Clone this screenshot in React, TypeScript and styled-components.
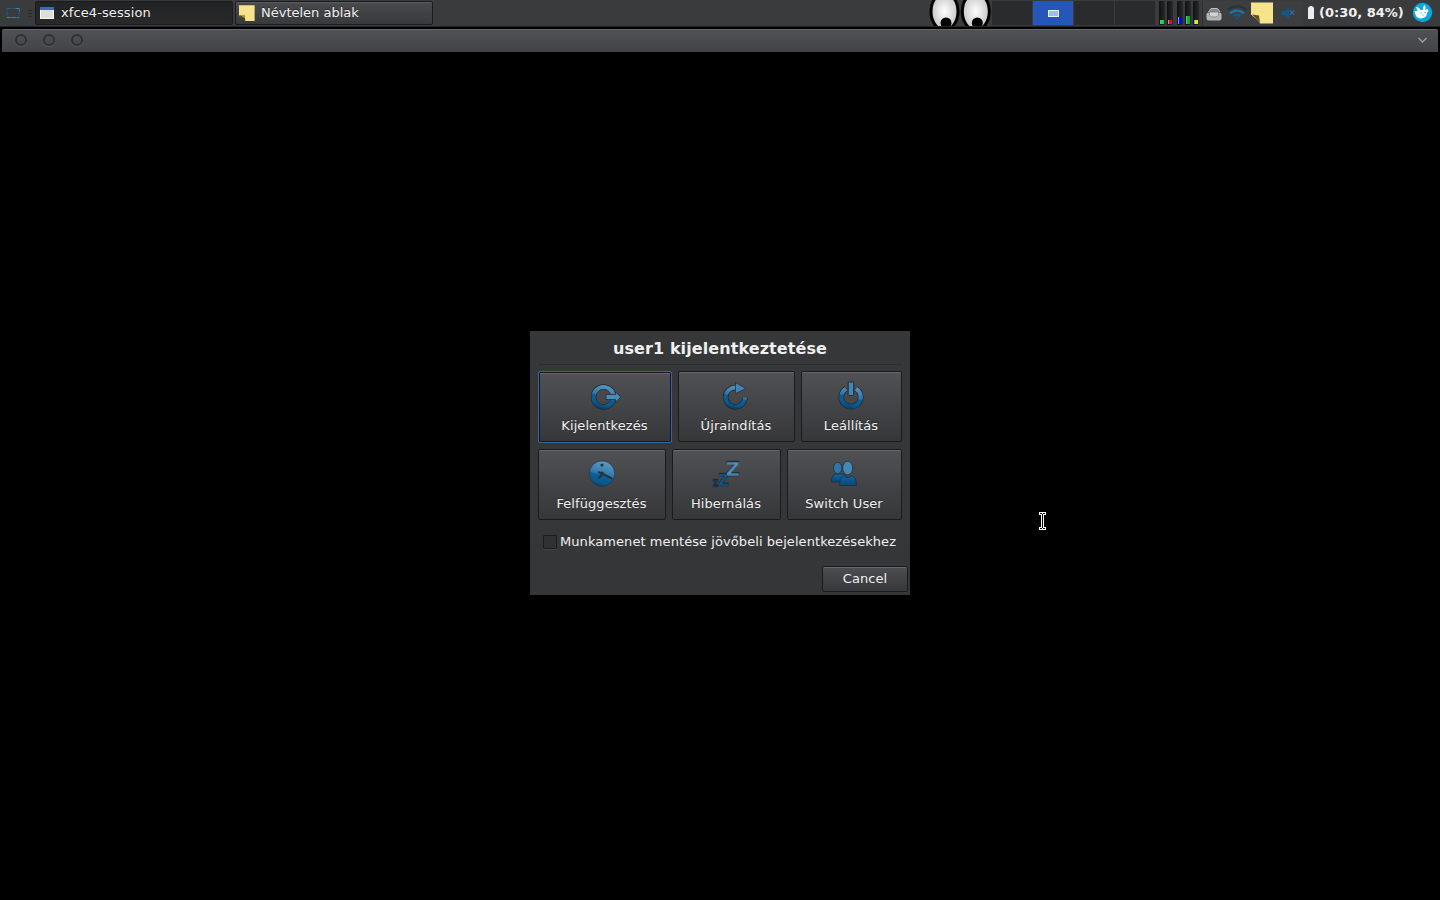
import React from 'react';
import styled, { createGlobalStyle } from 'styled-components';

const GlobalStyle = createGlobalStyle`
  html, body {
    margin: 0;
    padding: 0;
    background: #000;
    overflow: hidden;
  }

  * {
    box-sizing: border-box;
  }

  svg {
    display: block;
    flex: none;
  }
`;

const Desktop = styled.div`
  position: relative;
  display: flex;
  flex-direction: column;
  width: 1440px;
  height: 900px;
  background: #000;
  color: #f0f0f0;
  font-family: "DejaVu Sans", sans-serif;
  font-size: 13px;
  line-height: 16px;
  letter-spacing: 0.07px;
  overflow: hidden;
`;

const Panel = styled.header`
  display: flex;
  align-items: flex-start;
  height: 27px;
  background: #3a3b3d;
  border-bottom: 1px solid #242526;
`;

const Launcher = styled.div`
  display: flex;
  gap: 7px;
  width: 35px;
  height: 26px;
  padding: 6px 0 0 6px;
`;

const TaskButton = styled.button<{ $active?: boolean }>`
  display: flex;
  align-items: center;
  gap: ${(props) => (props.$active ? '7px' : '6px')};
  width: 198px;
  height: 24px;
  margin: 1px 2px 0 0;
  padding: 0 0 1px ${(props) => (props.$active ? '4px' : '3px')};
  border: 1px solid #1a1b1c;
  border-radius: 2px;
  background: ${(props) => (props.$active ? 'linear-gradient(#222324, #29292a)' : 'linear-gradient(#4a4b4e, #38393b)')};
  box-shadow: ${(props) => (props.$active ? 'none' : 'inset 0 1px 0 #5a5b5e')};
  color: #f0f0f0;
  font: inherit;
  letter-spacing: ${(props) => (props.$active ? '0.1px' : '0')};
  text-shadow: 0 -1px 0 rgba(0, 0, 0, 0.4);
`;

const PanelRight = styled.div`
  display: flex;
  margin-left: auto;
  height: 26px;
`;

const Pager = styled.div`
  display: flex;
  gap: 1px;
  padding: 1px 0;
`;

const Workspace = styled.div<{ $active?: boolean }>`
  display: flex;
  align-items: center;
  justify-content: center;
  width: 40px;
  height: 24px;
  background: ${(props) => (props.$active ? '#2457b8' : '#2a2b2d')};
`;

const MiniWindow = styled.div`
  width: 11px;
  height: 7px;
  border: 1px solid #f2f2f2;
  background: #9dbcff;
`;

const Monitors = styled.div`
  display: flex;
  gap: 2px;
  width: 47px;
  padding: 1px 0 1px 4px;
`;

const Meter = styled.div<{ $wide?: boolean }>`
  display: flex;
  align-items: flex-end;
  width: 6px;
  height: 24px;
  margin-left: ${(props) => (props.$wide ? '2px' : '0')};
  padding: 0 1px 1px;
  border-radius: 1px;
  background: linear-gradient(90deg, #111213, #29292b);
`;

const Level = styled.div<{ $color: string }>`
  width: 4px;
  background: linear-gradient(90deg, #69a7f5 1px, ${(props) => props.$color} 1px);
`;

const Tray = styled.div`
  display: flex;
  align-items: flex-start;
  width: 100px;
  height: 25px;
  margin-top: 1px;
  border-left: 1px solid #303133;
  background: #3d3e40;
`;

const Battery = styled.div`
  display: flex;
  width: 111px;
  padding: 5px 0 0 6px;
  gap: 5px;
  font-weight: bold;
  letter-spacing: 0;
  white-space: nowrap;
`;

const TitleBar = styled.div`
  display: flex;
  align-items: center;
  height: 23px;
  margin: 2px 2px 0;
  padding: 0 11px 2px 13px;
  border-top: 1px solid #66676a;
  border-radius: 2px 2px 0 0;
  background: linear-gradient(#505154, #434446);
`;

const WindowButton = styled.span`
  width: 12px;
  height: 12px;
  margin-right: 16px;
  border: 2px solid #303133;
  border-radius: 50%;
  box-shadow: 0 1px 0 #5a5b5e;
`;

const Stage = styled.main`
  display: flex;
  flex: 1;
  align-items: flex-start;
  justify-content: center;
  padding-top: 279px;
`;

const Dialog = styled.section`
  width: 380px;
  height: 264px;
  padding: 0 2px 3px 8px;
  background: linear-gradient(#363739, #353638);
`;

const DialogTitle = styled.h1`
  width: 364px;
  height: 34px;
  margin: 0 0 6px;
  padding-top: 8px;
  border-bottom: 1px solid #2b2c2d;
  font-size: 16px;
  line-height: 20px;
  letter-spacing: 0.09px;
  text-align: center;
  white-space: nowrap;
`;

const ButtonRow = styled.div`
  display: flex;
  justify-content: space-between;
  width: 364px;
  height: 71px;
  margin-bottom: 7px;
`;

const ActionButton = styled.button<{ $width: number; $focused?: boolean }>`
  display: flex;
  flex-direction: column;
  align-items: center;
  width: ${(props) => props.$width}px;
  height: ${(props) => (props.$focused ? 72 : 71)}px;
  padding: 8px 1px 0 0;
  border: 1px solid ${(props) => (props.$focused ? '#3a62ac' : '#1a1b1c')};
  border-radius: 2px;
  background: linear-gradient(#505154, #363739);
  box-shadow: ${(props) =>
    props.$focused ? 'inset 0 0 0 1px #17181a, inset 0 2px 0 #67686b' : 'inset 0 1px 0 #67686b'};
  color: #f0f0f0;
  font: inherit;
  letter-spacing: inherit;
  text-shadow: 0 -1px 0 rgba(0, 0, 0, 0.4);
  white-space: nowrap;

  svg {
    margin-bottom: 6px;
  }
`;

const SaveSession = styled.label`
  display: flex;
  align-items: center;
  gap: 3px;
  height: 16px;
  margin: 14px 0 16px 5px;
  white-space: nowrap;
`;

const CheckBox = styled.span`
  width: 14px;
  height: 14px;
  border: 1px solid #1b1c1d;
  border-radius: 1px;
  background: #303133;
  box-shadow: 0 1px 0 #454648;
`;

const CancelButton = styled.button`
  display: block;
  width: 86px;
  height: 26px;
  margin-left: auto;
  padding: 0 0 1px;
  border: 1px solid #1a1b1c;
  border-radius: 2px;
  background: linear-gradient(#4d4e51, #363739);
  box-shadow: inset 0 1px 0 #67686b;
  color: #f0f0f0;
  font: inherit;
  letter-spacing: inherit;
`;

const Pointer = styled.svg`
  position: absolute;
  left: 1037px;
  top: 511px;
`;

const HiddenDefs = styled.svg`
  position: absolute;
`;

const Gradients = () => (
  <HiddenDefs width="0" height="0">
    <defs>
      <linearGradient id="blue" gradientUnits="userSpaceOnUse" x1="20" y1="4" x2="13" y2="29">
        <stop offset="0" stopColor="#5b9ac4" />
        <stop offset="0.5" stopColor="#2f78ac" />
        <stop offset="0.55" stopColor="#0d5d96" />
        <stop offset="0.8" stopColor="#0a5a92" />
        <stop offset="1" stopColor="#063f6b" />
      </linearGradient>
      <linearGradient id="body" x1="0" y1="0" x2="0" y2="1">
        <stop offset="0" stopColor="#0f66a2" />
        <stop offset="1" stopColor="#094674" />
      </linearGradient>
      <radialGradient id="eyeball">
        <stop offset="0" stopColor="#fff" />
        <stop offset="1" stopColor="#c6c6c6" />
      </radialGradient>
    </defs>
  </HiddenDefs>
);

const LogoutIcon = () => (
  <svg width="32" height="32" viewBox="0 0 32 32" fill="none">
    <circle cx="14.5" cy="17" r="10" stroke="#242628" strokeWidth="5.5" />
    <circle cx="14.5" cy="17" r="10" stroke="url(#blue)" strokeWidth="4.2" />
    <path d="M17 14.500h9.500v-2.500l5.500 5l-5.500 5v-2.500h-9.500z" fill="#4a8cb9" stroke="#26292c" strokeWidth="0.8" />
  </svg>
);

const RestartIcon = () => (
  <svg width="32" height="32" viewBox="0 0 32 32" fill="none">
    <path d="M16 7.500A9.700 9.700 0 1 0 25 17.500" stroke="#242628" strokeWidth="5.5" />
    <path d="M16 7.500A9.700 9.700 0 1 0 25 17.500" stroke="url(#blue)" strokeWidth="4" />
    <path d="M15.500 2.500L26 8.500L15.500 13.500z" fill="#4383b0" stroke="#26292c" strokeWidth="0.7" />
  </svg>
);

const PowerIcon = () => (
  <svg width="32" height="32" viewBox="0 0 32 32" fill="none">
    <path d="M11 8.700A9.700 9.700 0 1 0 21 8.700" stroke="#242628" strokeWidth="5.5" />
    <path d="M11 8.700A9.700 9.700 0 1 0 21 8.700" stroke="url(#blue)" strokeWidth="4.2" />
    <rect x="13.2" y="2" width="5.500" height="13.500" rx="1" fill="#4385b3" stroke="#26292c" />
  </svg>
);

const ClockIcon = () => (
  <svg width="32" height="32" viewBox="0 0 32 32" fill="none">
    <circle cx="16" cy="15.5" r="12.7" fill="url(#blue)" stroke="#27333c" strokeWidth="0.8" />
    <circle cx="16" cy="7" r="1.6" fill="#243441" />
    <path d="M12 14L17 16L26 20.500M17 15.500L12.500 20.500" stroke="#243441" strokeWidth="2" />
    <circle cx="16" cy="15.5" r="2" fill="#243441" />
  </svg>
);

const SleepIcon = () => (
  <svg
    width="32"
    height="32"
    viewBox="0 0 32 32"
    fontFamily="DejaVu Sans"
    fontWeight="bold"
    stroke="#242628"
    strokeWidth="0.3"
    letterSpacing="0"
  >
    <text>
      <tspan x="2.5" y="28.500" fontSize="8" fill="#094b7b">Z</tspan>
      <tspan x="8" y="28" fontSize="15" fill="#0d5d96">Z</tspan>
      <tspan x="15.5" y="18" fontSize="20" fill="#4f90bc">Z</tspan>
    </text>
  </svg>
);

const UsersIcon = () => (
  <svg width="32" height="32" viewBox="0 0 32 32" stroke="#25282b" strokeWidth="0.7">
    <path d="M3.500 24c0-5 2-8 5-8h6c3 0 5 3 5 8z" fill="url(#body)" />
    <ellipse cx="9.700" cy="10" rx="4.200" ry="5.700" fill="#2e76aa" />
    <path d="M11.500 27.500c0-6 2-9.500 5-9.500c2 2 5 2 7 0c3 0 5 3.500 5 9.500z" fill="url(#body)" />
    <ellipse cx="19.700" cy="10" rx="5" ry="6.800" fill="#4787b3" />
  </svg>
);

const NoteIcon = ({ size }: { size: number }) => (
  <svg width={size} height={size} viewBox="0 0 22 22">
    <path d="M0 0.500H21.500V22H9L0 14.500z" fill="#f6e38c" />
    <path d="M0 14.500L8 14L8.500 22z" fill="#3b3210" />
    <path d="M2 14l6-.5v5z" fill="#b59b48" />
  </svg>
);

const WindowIcon = () => (
  <svg width="14" height="12" viewBox="0 0 14 12">
    <rect width="14" height="12" fill="#f8f8f6" />
    <rect width="14" height="3" fill="#3b6cb0" />
    <rect x="1" y="3" width="12" height="8" fill="#dedfd9" />
  </svg>
);

const Eyes = () => (
  <svg width="63" height="26" viewBox="0 0 63 26">
    {[15.5, 46.8].map((x) => (
      <g key={x}>
        <ellipse cx={x} cy="11.500" rx="13.500" ry="18.500" fill="url(#eyeball)" stroke="#000" strokeWidth="3" />
        <circle cx={x + 1.5} cy="23" r="5.500" />
      </g>
    ))}
  </svg>
);

const TrayIcons = () => (
  <svg width="98" height="25" viewBox="1203 1 98 25">
    <rect x="1206.500" y="12.500" width="15" height="8" rx="2" fill="#b4b4b4" />
    <path d="M1208.500 12l2.500-3.500h6.500l2.500 3.500" fill="#888" stroke="#bcbcbc" />
    <path d="M1209.500 12h9v3l-2 2h-5l-2-2z" fill="#d2d2d2" stroke="#777" strokeWidth="0.700" />
    <g fill="none" strokeWidth="2.200">
      <path d="M1228 10a13.500 13.500 0 0 1 18.500 0" stroke="#28333a" />
      <path d="M1230 13.500a10 10 0 0 1 14 0" stroke="#2370a3" />
      <path d="M1233.500 16a6 6 0 0 1 7 0" stroke="#105d91" />
    </g>
    <circle cx="1237" cy="18" r="1.600" fill="#0d5486" />
    <path d="M1251 2.500h22v21h-13l-2-3l-7-6z" fill="#f6e38c" />
    <path d="M1252 14.500l7 1l1 8l-2-3z" fill="#5e501f" />
    <path d="M1281.500 11h3l4.500-3.500v11l-4.500-3.500h-3z" fill="#0d588c" />
    <path d="M1290 10.500l4 4m0-4l-4 4" stroke="#2b709e" strokeWidth="1.300" />
  </svg>
);

const BatteryIcon = () => (
  <svg width="6" height="15" viewBox="0 0 6 15">
    <path d="M0 3q0-1 1.500-1V1h3v1q1.500 0 1.500 1v11H0z" fill="#ededed" />
  </svg>
);

const MouseIcon = () => (
  <svg width="20" height="26" viewBox="1413 0 20 26">
    <circle cx="1422.500" cy="12.500" r="9.700" fill="#07a9df" />
    <path
      d="M1414.500 11l3 0l-1.500-4q3 0 4.500 3l2.500 0q-.5-3.500 1.500-5q2 2 .5 5.500l2.500-2l1 2.500l-1.500 2q0 4.500-5.500 5.500q-5 0-6-4z"
      fill="#fff"
    />
    <path d="M1420.500 13h1m3-.5h1m-3 2.500h1" stroke="#07a9df" />
  </svg>
);

const topActions = [
  { label: 'Kijelentkezés', width: 134, icon: <LogoutIcon />, focused: true },
  { label: 'Újraindítás', width: 117, icon: <RestartIcon /> },
  { label: 'Leállítás', width: 101, icon: <PowerIcon /> },
];

const bottomActions = [
  { label: 'Felfüggesztés', width: 128, icon: <ClockIcon /> },
  { label: 'Hibernálás', width: 109, icon: <SleepIcon /> },
  { label: 'Switch User', width: 115, icon: <UsersIcon /> },
];

const meters = [
  { color: '#13e613', level: 4 },
  { color: '#f20808', level: 4 },
  { color: '#0808c8', level: 7, wide: true },
  { color: '#0ab80a', level: 8 },
  { color: '#efe70a', level: 4 },
];

const App = () => {
  return (
    <Desktop>
      <GlobalStyle />
      <Gradients />
      <Panel>
        <Launcher>
          <svg width="15" height="13" viewBox="0 0 15 13" fill="none">
            <path d="M1 2.500h12v9H1z" stroke="#1c608c" strokeDasharray="4 1" />
            <path d="M1 11.500h12M10 2.500h3.500v3" stroke="#3f7fa8" strokeDasharray="4 1" />
          </svg>
          <svg width="4" height="14" viewBox="0 0 4 14">
            <path d="M0 4.500h4M0 7.500h4M0 10.500h4" stroke="#292a2b" />
          </svg>
        </Launcher>
        <TaskButton $active>
          <WindowIcon />
          xfce4-session
        </TaskButton>
        <TaskButton>
          <NoteIcon size={16} />
          Névtelen ablak
        </TaskButton>
        <PanelRight>
          <Eyes />
          <Pager>
            <Workspace />
            <Workspace $active>
              <MiniWindow />
            </Workspace>
            <Workspace />
            <Workspace />
          </Pager>
          <Monitors>
            {meters.map((meter, index) => (
              <Meter key={index} $wide={meter.wide}>
                <Level $color={meter.color} style={{ height: meter.level }} />
              </Meter>
            ))}
          </Monitors>
          <Tray>
            <TrayIcons />
          </Tray>
          <Battery>
            <BatteryIcon />
            (0:30, 84%)
          </Battery>
          <MouseIcon />
          <svg width="7" height="26" />
        </PanelRight>
      </Panel>
      <TitleBar>
        <WindowButton />
        <WindowButton />
        <WindowButton />
        <svg width="9" height="6" viewBox="0 0 9 6" style={{ marginLeft: 'auto' }}>
          <path d="M0.500 1L4.500 5L8.500 1" fill="none" stroke="#a0a1a3" strokeWidth="1.300" />
        </svg>
      </TitleBar>
      <Stage>
        <Dialog>
          <DialogTitle>user1 kijelentkeztetése</DialogTitle>
          <ButtonRow>
            {topActions.map((action) => (
              <ActionButton key={action.label} $width={action.width} $focused={action.focused}>
                {action.icon}
                {action.label}
              </ActionButton>
            ))}
          </ButtonRow>
          <ButtonRow>
            {bottomActions.map((action) => (
              <ActionButton key={action.label} $width={action.width}>
                {action.icon}
                {action.label}
              </ActionButton>
            ))}
          </ButtonRow>
          <SaveSession>
            <CheckBox />
            Munkamenet mentése jövőbeli bejelentkezésekhez
          </SaveSession>
          <CancelButton>Cancel</CancelButton>
        </Dialog>
      </Stage>
      <Pointer width="10" height="20" viewBox="0 0 10 20" shapeRendering="crispEdges">
        <path d="M2 1h7v3h-2v12h2v3h-7v-3h2v-12h-2z" fill="#fff" />
        <path d="M3 2h2v1h1v-1h2v1h-2v14h2v1h-2v-1h-1v1h-2v-1h2v-14h-2z" fill="#000" />
      </Pointer>
    </Desktop>
  );
};

export default App;
